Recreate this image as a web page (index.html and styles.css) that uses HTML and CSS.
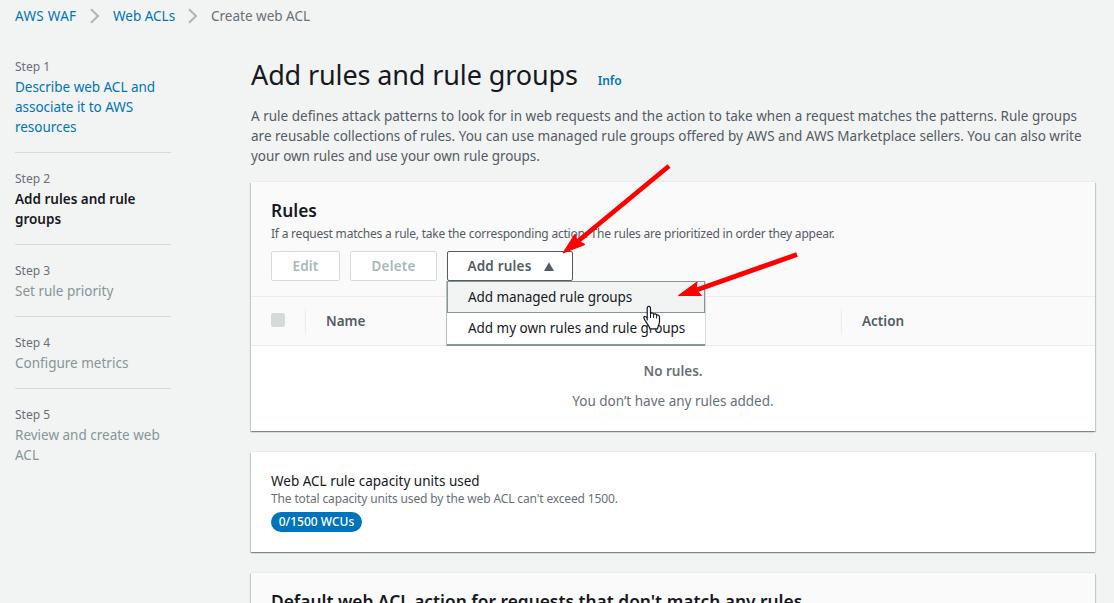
FILE: index.html
```html
<!DOCTYPE html>
<html lang="en">
<head>
<meta charset="utf-8">
<title>Create web ACL</title>
<link rel="stylesheet" href="styles.css">
</head>
<body>
<div class="page">
  <nav class="breadcrumb">
    <a class="crumb crumb-waf">AWS WAF</a>
    <svg class="chevron" width="10" height="16" viewBox="0 0 10 16"><path d="M1 1.2 8 8l-7 6.8"/></svg>
    <a class="crumb crumb-acls">Web ACLs</a>
    <svg class="chevron" width="10" height="16" viewBox="0 0 10 16"><path d="M1 1.2 8 8l-7 6.8"/></svg>
    <span class="crumb crumb-current">Create web ACL</span>
  </nav>
  <div class="columns">
    <aside class="steps">
      <div class="step"><div class="step-label">Step 1</div><a class="step-name link">Describe web ACL and<br>associate it to AWS<br>resources</a></div>
      <div class="step"><div class="step-label">Step 2</div><div class="step-name current">Add rules and rule<br>groups</div></div>
      <div class="step"><div class="step-label">Step 3</div><div class="step-name">Set rule priority</div></div>
      <div class="step"><div class="step-label">Step 4</div><div class="step-name">Configure metrics</div></div>
      <div class="step"><div class="step-label">Step 5</div><div class="step-name">Review and create web<br>ACL</div></div>
    </aside>
    <main class="main">
      <header class="title-row"><h1 class="title">Add rules and rule groups</h1><a class="info">Info</a></header>
      <p class="intro"><span class="intro-a">A rule defines attack patterns to look for in web requests and the action to take when a request matches the patterns. Rule groups</span><br><span class="intro-b">are reusable collections of rules. You can use managed rule groups offered by AWS and AWS Marketplace sellers. You can also write</span><br><span class="intro-c">your own rules and use your own rule groups.</span></p>
      <section class="card">
        <div class="card-head">
          <h2 class="card-title rules-title">Rules</h2>
          <p class="card-desc">If a request matches a rule, take the corresponding action. The rules are prioritized in order they appear.</p>
          <div class="actions">
            <button class="btn btn-edit" disabled>Edit</button>
            <button class="btn btn-delete" disabled>Delete</button>
            <div class="dropdown">
              <button class="btn btn-add">Add rules<svg width="10" height="9" viewBox="0 0 10 9"><path d="M5 .3 10 9H0z"/></svg></button>
              <div class="menu">
                <div class="menu-item hovered">Add managed rule groups</div>
                <div class="menu-item own">Add my own rules and rule groups</div>
              </div>
            </div>
          </div>
        </div>
        <div class="table-head">
          <div class="cell cell-check"><span class="checkbox"></span></div>
          <div class="cell cell-name">Name</div>
          <div class="cell cell-action">Action</div>
        </div>
        <div class="empty"><strong class="empty-title">No rules.</strong><span class="empty-text">You don’t have any rules added.</span></div>
      </section>
      <section class="card capacity">
        <div class="capacity-title">Web ACL rule capacity units used</div>
        <div class="capacity-desc">The total capacity units used by the web ACL can't exceed 1500.</div>
        <span class="badge">0/1500 WCUs</span>
      </section>
      <section class="card default-action">
        <h2 class="card-title default-title">Default web ACL action for requests that don't match any rules</h2>
      </section>
    </main>
  </div>
  <svg class="annotations" width="1114" height="603" viewBox="0 0 1114 603">
    <path class="arrow-line" d="M669 166 577 242"/>
    <path class="arrow-head" d="M563 253 575 234 577 240.500 585 244.500z"/>
    <path class="arrow-line" d="M797 254.500 695 290.500"/>
    <path class="arrow-head" d="M678.500 295.500 697 282 696 289.500 701.500 295.500z"/>
    <path class="pointer" d="M647.200 320v-11.500c0-2.700 3.300-2.700 3.300 0v5c1-1 3-.7 3.100.8 1.200-.9 2.900-.4 3 1 1.300-.8 2.900 0 2.900 1.600v4.500c0 3-1.300 3.600-2 7.500h-7.500c-.5-2.500-2.500-4.400-4-7-1-1.700-2.200-2.800-2.200-4.300 0-1.700 2.200-1.500 3.400.8z"/>
    <path class="pointer-lines" d="M650.500 312v6M653.600 314v4M656.600 315.500v3"/>
  </svg>
</div>
</body>
</html>
```
FILE: styles.css
```css
* { box-sizing: border-box; }
body { margin: 0; background: #f2f3f3; color: #545b64; font: 14px/20px "Noto Sans", "Open Sans", sans-serif; }
h1, h2, p { margin: 0; }
.page { position: relative; width: 1114px; height: 603px; overflow: hidden; white-space: nowrap; }
.breadcrumb { display: flex; align-items: center; height: 32px; padding-left: 15px; font-size: 13.500px; }
.crumb { color: #0073bb; }
.crumb-waf { width: 75px; letter-spacing: .32px; }
.crumb-acls { width: 75px; }
.crumb-waf, .crumb-acls { flex: none; }
.crumb-acls { margin-left: 13px; }
.crumb-current { margin-left: 13px; color: #687078; }
.chevron { fill: none; stroke: #aab7b8; stroke-width: 2; }
.columns { display: flex; gap: 80px; padding: 25px 19px 0 15px; }
.steps { width: 156px; }
.step { padding-bottom: 15px; margin-bottom: 16px; border-bottom: 1px solid #d5dbdb; }
.step:last-child { border: 0; }
.step-label { font-size: 12px; color: #687078; }
.step-name { display: block; font-size: 13.500px; color: #879596; }
.step-name.link { color: #0073bb; letter-spacing: -.03px; }
.step-name.current { color: #16191f; font-weight: 600; }
.main { width: 844px; }
.title-row { display: flex; align-items: baseline; gap: 20px; height: 49px; }
.title { font-size: 27px; line-height: 36px; font-weight: 400; color: #16191f; letter-spacing: -.12px; }
.info { font-size: 12px; font-weight: 600; color: #0073bb; }
.intro { font-size: 13.500px; }
.intro-a { letter-spacing: .008px; }
.intro-c { letter-spacing: -.06px; }
.card { margin-top: 16px; background: #fff; box-shadow: 0 1px 1px rgba(0,28,36,.3), 1px 1px 1px rgba(0,28,36,.15), -1px 1px 1px rgba(0,28,36,.15), 0 -1px 0 #eaeded; }
.card + .card { margin-top: 21px; }
.card-head { height: 115px; padding: 18px 20px 0; background: #fafafa; border-bottom: 1px solid #eaeded; }
.card-title { font-size: 17.350px; line-height: 21px; font-weight: 600; color: #16191f; }
.card-desc { padding-top: 2px; font-size: 12px; line-height: 22px; letter-spacing: -.215px; }
.actions { display: flex; gap: 10px; margin-top: 6px; }
.dropdown { position: relative; }
.btn { display: flex; align-items: center; justify-content: center; height: 30px; padding: 0; border: 1px solid #545b64; border-radius: 2px; background: #fff; color: #545b64; font: 600 13.500px/20px "Noto Sans", sans-serif; letter-spacing: .2px; }
.btn:disabled { border-color: #d5dbdb; color: #aab7b8; }
.btn-edit { width: 69px; }
.btn-delete { width: 87px; }
.btn-add { width: 126px; padding-left: 1px; gap: 12px; }
.btn-add svg { fill: #545b64; }
.menu { position: absolute; top: 30px; left: 0; width: 258px; height: 65px; background: #fff; border-bottom: 2px solid #879596; box-shadow: -1px 0 #b8c0c1, 1px 0 #d5dbdb; z-index: 1; color: #16191f; font-size: 13.500px; letter-spacing: -.03px; }
.menu-item { height: 31px; padding: 5px 20px 5px 21px; }
.menu-item.hovered { height: 32px; padding: 5px 20px; background: #f2f3f3; border: 1px solid #879596; letter-spacing: -.08px; }
.table-head { display: flex; align-items: center; height: 49px; background: #fafafa; border-bottom: 1px solid #eaeded; font-weight: 600; font-size: 13.500px; }
.cell { height: 24px; line-height: 24px; }
.cell-check { display: flex; align-items: center; width: 54px; padding-left: 20px; }
.checkbox { width: 14px; height: 14px; margin-top: -2px; border-radius: 2px; background: #d5dbdb; }
.cell-name { width: 536px; padding-left: 20px; border-left: 1px solid #eaeded; }
.cell-action { padding-left: 20px; border-left: 1px solid #eaeded; }
.empty { display: flex; flex-direction: column; align-items: center; gap: 10px; height: 85px; padding-top: 15px; color: #687078; font-size: 13.500px; }
.empty-title { font-weight: 600; }
.capacity { height: 100px; padding: 19px 20px; }
.capacity-title { color: #16191f; font-size: 13.500px; }
.capacity-desc { color: #687078; font-size: 12px; line-height: 16px; letter-spacing: -.14px; }
.badge { display: block; width: 91px; height: 20px; margin-top: 5px; border-radius: 10px; background: #0073bb; color: #fff; font-size: 12px; font-weight: 500; text-align: center; }
.default-action { height: 80px; padding: 18px 20px; background: #fafafa; }
.annotations { position: absolute; inset: 0; z-index: 2; }
.arrow-line { stroke: #f00; stroke-width: 4.800; }
.arrow-head { fill: #f00; stroke: #f00; stroke-width: 1; }
.pointer { fill: #fff; stroke: #111827; stroke-width: 1.200; stroke-linejoin: round; }
.pointer-lines { stroke: #111827; stroke-width: 1; }
```
